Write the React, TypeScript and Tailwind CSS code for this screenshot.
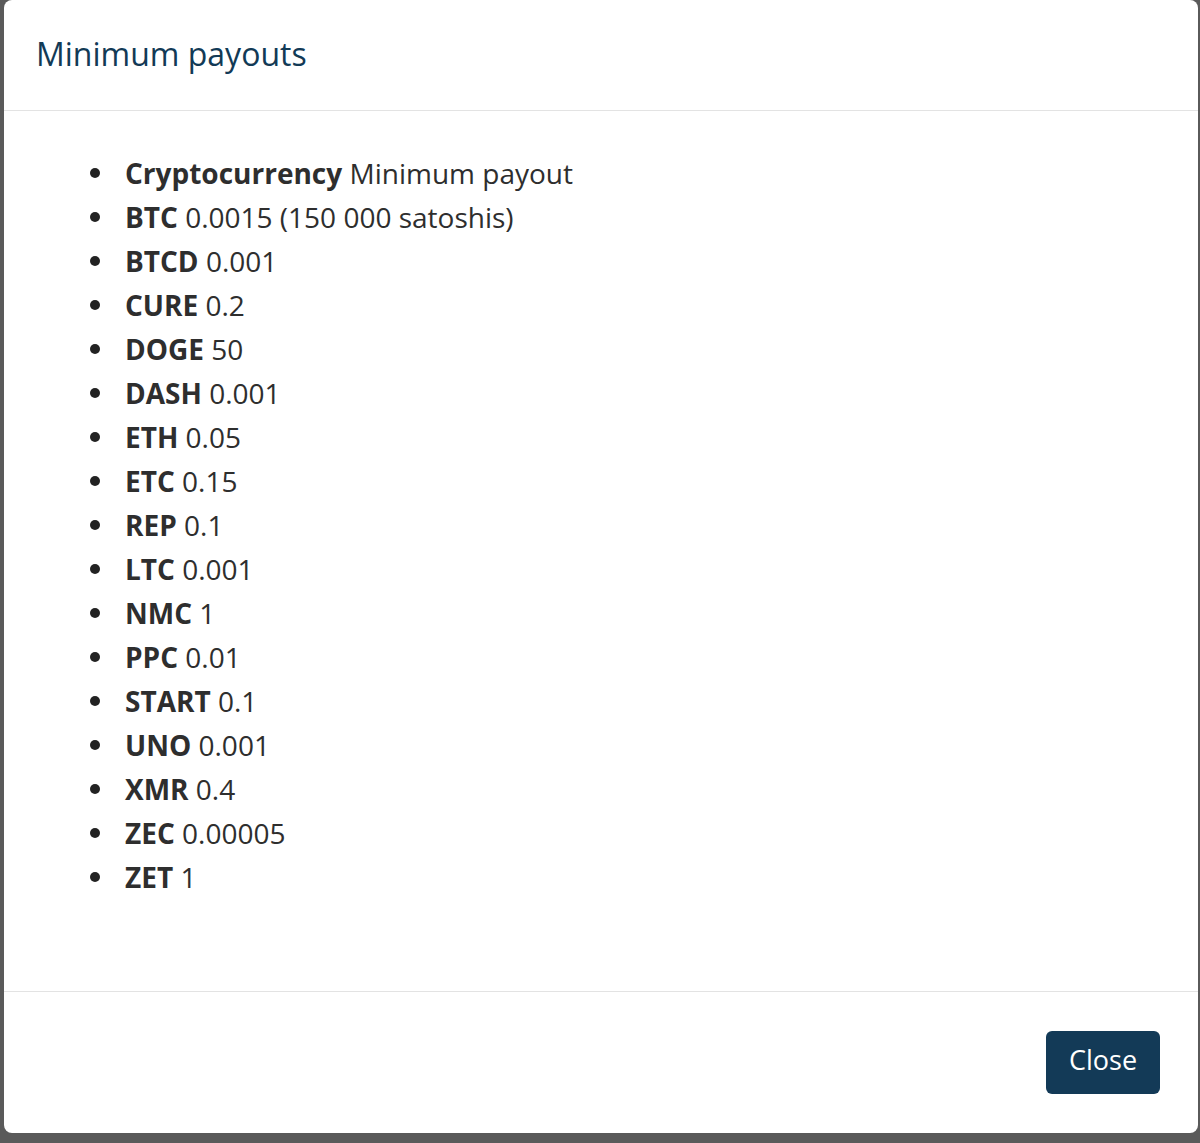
const PAYOUTS: { coin: string; amount: string }[] = [
  { coin: "Cryptocurrency", amount: "Minimum payout" },
  { coin: "BTC", amount: "0.0015 (150 000 satoshis)" },
  { coin: "BTCD", amount: "0.001" },
  { coin: "CURE", amount: "0.2" },
  { coin: "DOGE", amount: "50" },
  { coin: "DASH", amount: "0.001" },
  { coin: "ETH", amount: "0.05" },
  { coin: "ETC", amount: "0.15" },
  { coin: "REP", amount: "0.1" },
  { coin: "LTC", amount: "0.001" },
  { coin: "NMC", amount: "1" },
  { coin: "PPC", amount: "0.01" },
  { coin: "START", amount: "0.1" },
  { coin: "UNO", amount: "0.001" },
  { coin: "XMR", amount: "0.4" },
  { coin: "ZEC", amount: "0.00005" },
  { coin: "ZET", amount: "1" },
];

// ─── Modal ────────────────────────────────────────────────────────────────────
function PayoutsModal() {
  return (
    <div className="flex h-[1133px] flex-col rounded-lg bg-white">
      {/* Header */}
      <div className="flex h-[111px] shrink-0 items-center border-b border-[#e3e3e3] px-8 pb-[2px]">
        <h2 className="text-[32px] font-normal leading-none text-[#123a56]">
          Minimum payouts
        </h2>
      </div>

      {/* Body */}
      <div className="flex-1 px-8 pt-[40px]">
        <ul className="pl-[54px] text-[28px] leading-[44px] text-[#2e2e2e]">
          {PAYOUTS.map((p) => (
            <li key={p.coin} className="flex items-center">
              {/* bullet */}
              <span className="mr-[25px] h-[10px] w-[10px] shrink-0 rounded-full bg-[#222]" />
              <span>
                <span className="font-bold">{p.coin}</span> {p.amount}
              </span>
            </li>
          ))}
        </ul>
      </div>

      {/* Footer */}
      <div className="flex h-[142px] shrink-0 items-center justify-end border-t border-[#e3e3e3] pr-[38px]">
        <button className="h-[63px] w-[114px] rounded-md bg-[#133a57] pb-[4px] text-[27px] text-white">
          Close
        </button>
      </div>
    </div>
  );
}

export default function App() {
  return (
    <div
      className="h-[1143px] w-[1200px] overflow-hidden bg-[#5a5a5a] pl-[4px] pr-[2px]"
      style={{ fontFamily: '"Open Sans", "Noto Sans", sans-serif' }}
    >
      <PayoutsModal />
    </div>
  );
}
